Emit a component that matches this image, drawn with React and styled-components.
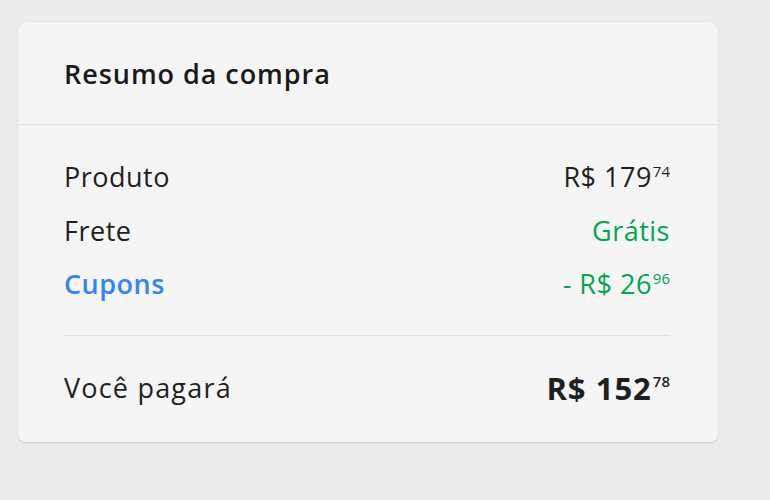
import styled, { createGlobalStyle } from "styled-components";

const GlobalStyle = createGlobalStyle`
  html, body {
    margin: 0;
    padding: 0;
    background: #ededed;
  }
  body {
    font-family: "Open Sans", "Liberation Sans", sans-serif;
    color: #1f1f1f;
  }
`;

const Page = styled.div`
  padding: 23px 0 0 18px;
  min-height: 500px;
  box-sizing: border-box;
`;

const Card = styled.section`
  width: 700px;
  background: #f5f5f5;
  border-radius: 8px;
  box-shadow: 0 1px 2px rgba(0, 0, 0, 0.15);
`;

const Header = styled.header`
  height: 102px;
  display: flex;
  align-items: center;
  padding: 0 46px;
  border-bottom: 1px solid #e0e0e0;
  box-sizing: border-box;
`;

const Title = styled.h2`
  margin: 0;
  font-size: 27px;
  font-weight: 600;
  letter-spacing: 0.95px;
  color: #1a1a1a;
`;

const Body = styled.div`
  padding: 25px 48px 27px 46px;
`;

const Row = styled.div`
  display: flex;
  justify-content: space-between;
  align-items: center;
  height: ${(p) => (p.$total ? "54px" : "53.5px")};
  font-size: 27px;
  letter-spacing: 0.5px;
`;

const Label = styled.span`
  color: ${(p) => (p.$link ? "#3483fa" : "#1f1f1f")};
  font-weight: ${(p) => (p.$link ? 600 : 400)};
  letter-spacing: ${(p) => (p.$wide ? "1.2px" : "inherit")};
`;

const Value = styled.span`
  display: flex;
  align-items: flex-start;
  color: ${(p) => (p.$green ? "#00a650" : "#1f1f1f")};
  font-weight: ${(p) => (p.$bold ? 700 : 400)};
  font-size: ${(p) => (p.$bold ? "31px" : "27px")};
  letter-spacing: ${(p) => (p.$bold ? "1px" : "0.5px")};
`;

const Cents = styled.span`
  font-size: 15px;
  margin-left: 1px;
  line-height: 1;
  margin-top: ${(p) => (p.$bold ? "7px" : "6px")};
  letter-spacing: 0;
  font-weight: ${(p) => (p.$bold ? 600 : 400)};
`;

const Divider = styled.hr`
  border: 0;
  border-top: 1px solid #e0e0e0;
  margin: 24px 0 25px;
`;

const Price = ({ whole, cents, prefix = "", ...rest }) => (
  <Value {...rest}>
    {prefix}R$ {whole}
    <Cents $bold={rest.$bold}>{cents}</Cents>
  </Value>
);

export default function App() {
  return (
    <>
      <GlobalStyle />
      <Page>
        <Card>
          <Header>
            <Title>Resumo da compra</Title>
          </Header>
          <Body>
            <Row>
              <Label>Produto</Label>
              <Price whole="179" cents="74" />
            </Row>
            <Row>
              <Label>Frete</Label>
              <Value $green>Grátis</Value>
            </Row>
            <Row>
              <Label $link>Cupons</Label>
              <Price prefix="- " whole="26" cents="96" $green />
            </Row>
            <Divider />
            <Row $total>
              <Label $wide>Você pagará</Label>
              <Price whole="152" cents="78" $bold />
            </Row>
          </Body>
        </Card>
      </Page>
    </>
  );
}
